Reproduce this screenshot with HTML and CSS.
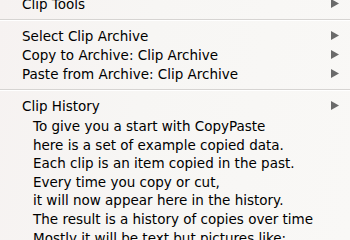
FILE: index.html
```html
<!DOCTYPE html>
<html lang="en">
<head>
    <meta charset="UTF-8">
    <title>Clip Menu</title>
    <link rel="stylesheet" href="styles.css">
</head>
<body>
    <div class="menu">
        <div class="item">
            <span>Clip Tools</span>
            <svg class="arrow" viewBox="0 0 8 9"><polygon points="0,0 8,4.5 0,9"/></svg>
        </div>
        <div class="separator"></div>
        <div class="item">
            <span>Select Clip Archive</span>
            <svg class="arrow" viewBox="0 0 8 9"><polygon points="0,0 8,4.5 0,9"/></svg>
        </div>
        <div class="item">
            <span>Copy to Archive: Clip Archive</span>
            <svg class="arrow" viewBox="0 0 8 9"><polygon points="0,0 8,4.5 0,9"/></svg>
        </div>
        <div class="item">
            <span>Paste from Archive: Clip Archive</span>
            <svg class="arrow" viewBox="0 0 8 9"><polygon points="0,0 8,4.5 0,9"/></svg>
        </div>
        <div class="separator"></div>
        <div class="item">
            <span>Clip History</span>
            <svg class="arrow" viewBox="0 0 8 9"><polygon points="0,0 8,4.5 0,9"/></svg>
        </div>
        <div class="history">
            <div class="clip">To give you a start with CopyPaste</div>
            <div class="clip">here is a set of example copied data.</div>
            <div class="clip">Each clip is an item copied in the past.</div>
            <div class="clip">Every time you copy or cut,</div>
            <div class="clip">it will now appear here in the history.</div>
            <div class="clip">The result is a history of copies over time</div>
            <div class="clip">Mostly it will be text but pictures like:</div>
        </div>
    </div>
</body>
</html>
```

FILE: styles.css
```css
body {
    margin: 0;
    width: 350px;
    height: 240px;
    overflow: hidden;
    background: linear-gradient(100deg, #f6f2f1 0%, #f7f6f4 40%, #f9f8f6 100%);
    font-family: "DejaVu Sans", sans-serif;
    font-size: 13.5px;
    color: #000;
}
.menu {
    margin-top: -6px;
}
.item {
    display: flex;
    justify-content: space-between;
    align-items: center;
    height: 19px;
    padding: 0 11px 0 22px;
}
.arrow {
    width: 8px;
    height: 9px;
    fill: #6a6a6a;
}
.separator {
    height: 1px;
    margin: 6px 0 5px;
    background-color: #d6d4d2;
    border-bottom: 1px solid #ffffff;
}
.history {
    padding-top: 2px;
}
.clip {
    height: 18.6px;
    line-height: 18.6px;
    padding-left: 33px;
}
```
